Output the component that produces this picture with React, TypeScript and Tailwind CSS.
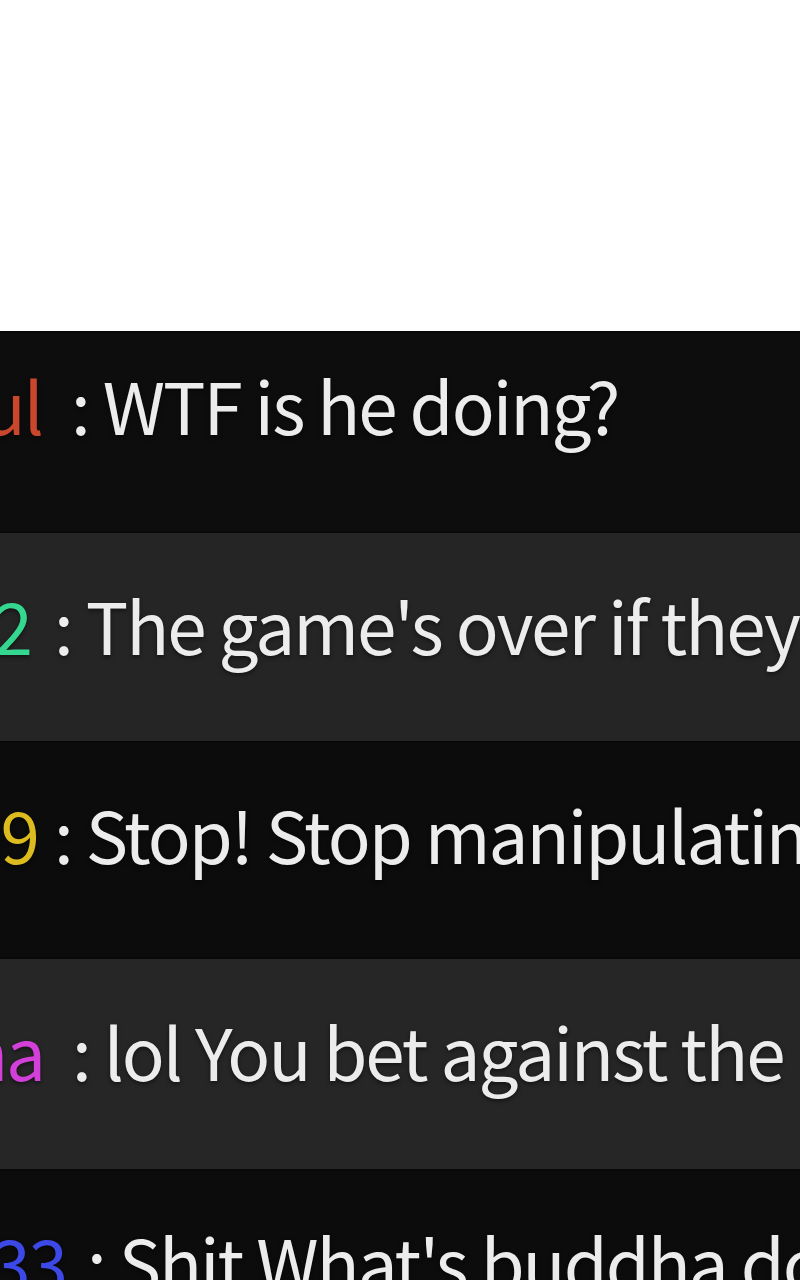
const rows = [
  {
    name: "Haneul",
    nameColor: "text-[#c8472d]",
    nameBox: "w-[42px]",
    colonGap: "ml-[29px]",
    msg: "WTF is he doing?",
    bg: "bg-[#0d0d0d]",
    height: "h-[200px]",
    pad: "pt-[29px]",
  },
  {
    name: "gamer2",
    nameColor: "text-[#35d790]",
    nameBox: "w-[31px]",
    colonGap: "ml-[23px]",
    msg: "The game's over if they let him win",
    bg: "bg-[#252525]",
    height: "h-[210px]",
    pad: "pt-[49px]",
  },
  {
    name: "bet99",
    nameColor: "text-[#dcbb1f]",
    nameBox: "w-[38px]",
    colonGap: "ml-[16px]",
    msg: "Stop! Stop manipulating the odds",
    bg: "bg-[#0c0c0c]",
    height: "h-[216px]",
    pad: "pt-[48px]",
  },
  {
    name: "Buddha",
    nameColor: "text-[#d33fd9]",
    nameBox: "w-[44px]",
    colonGap: "ml-[28px]",
    msg: "lol You bet against the buddha?",
    bg: "bg-[#262626]",
    height: "h-[212px]",
    pad: "pt-[49px]",
  },
  {
    name: "zen333",
    nameColor: "text-[#3d49e6]",
    nameBox: "w-[66px]",
    colonGap: "ml-[21px]",
    msg: "Shit What's buddha doing",
    bg: "bg-[#0c0c0c]",
    height: "h-[210px]",
    pad: "pt-[48px]",
  },
];

const ChatRow = ({ row }: any) => {
  return (
    <div className={`${row.bg} ${row.height} ${row.pad} overflow-hidden border-t-2 border-[#080808]`}>
      <div className="flex items-baseline whitespace-nowrap text-[71px] leading-[1.2] tracking-[-2px] text-[#ececec] [text-shadow:0_2px_4px_rgba(0,0,0,0.5)]">
        {/* name, clipped on the left */}
        <span className={`${row.nameBox} flex shrink-0 justify-end overflow-hidden ${row.nameColor}`}>
          {row.name}
        </span>
        <span className={`${row.colonGap} shrink-0`}>: {row.msg}</span>
      </div>
    </div>
  );
};

export default function App() {
  return (
    <div
      className="w-[800px] h-[1280px] overflow-hidden bg-white"
      style={{ fontFamily: '"Noto Sans CJK KR", "Noto Sans", sans-serif' }}
    >
      <div className="h-[331px] bg-white" />
      {rows.map((row) => (
        <ChatRow key={row.name} row={row} />
      ))}
    </div>
  );
}
